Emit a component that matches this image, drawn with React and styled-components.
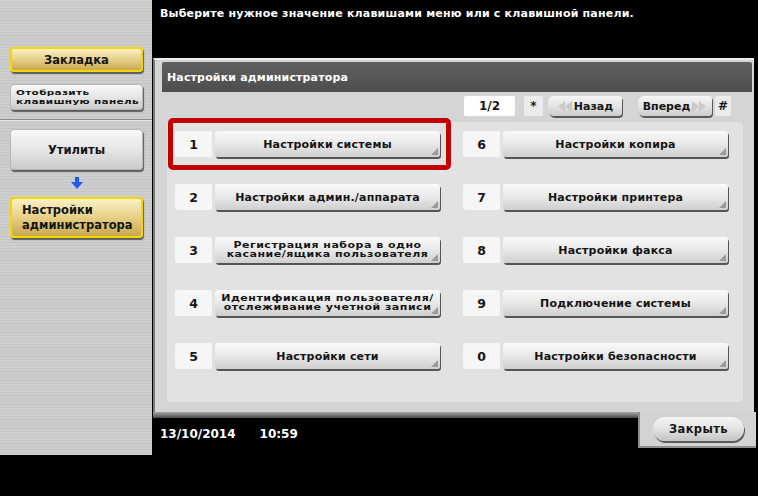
import React from 'react';
import styled, { createGlobalStyle, css } from 'styled-components';

const GlobalStyle = createGlobalStyle`
  html, body {
    margin: 0;
    padding: 0;
    background: #000;
  }
  body {
    font-family: "DejaVu Sans", "Liberation Sans", sans-serif;
  }
`;

const leftItems = [
  { num: '1', label: 'Настройки системы', selected: true },
  { num: '2', label: 'Настройки админ./аппарата' },
  { num: '3', label: ['Регистрация набора в одно', 'касание/ящика пользователя'] },
  { num: '4', label: ['Идентификация пользователя/', 'отслеживание учетной записи'] },
  { num: '5', label: 'Настройки сети' },
];

const rightItems = [
  { num: '6', label: 'Настройки копира' },
  { num: '7', label: 'Настройки принтера' },
  { num: '8', label: 'Настройки факса' },
  { num: '9', label: 'Подключение системы' },
  { num: '0', label: 'Настройки безопасности' },
];

const Screen = styled.div`
  width: 758px;
  height: 496px;
  background: #000;
  display: grid;
  grid-template-columns: 152px 1fr;
  overflow: hidden;
`;

const Sidebar = styled.div`
  height: 455px;
  background: repeating-linear-gradient(180deg, #cecece 0 2px, #c5c5c5 2px 3px);
  display: flex;
  flex-direction: column;
`;

const SideTop = styled.div`
  height: 120px;
  box-sizing: border-box;
  padding: 47px 9px 0 10px;
  display: flex;
  flex-direction: column;
  gap: 12px;
  border-bottom: 1px solid #8c8c8c;
  box-shadow: 0 1px 0 #e4e4e4;
`;

const SideBottom = styled.div`
  padding: 9px 9px 0 10px;
  display: flex;
  flex-direction: column;
`;

const SideButton = styled.div`
  height: ${p => p.$h}px;
  box-sizing: border-box;
  border-radius: 4px;
  display: flex;
  flex-direction: column;
  justify-content: center;
  align-items: ${p => (p.$left ? 'flex-start' : 'center')};
  padding-left: ${p => (p.$left ? p.$indent : 0)}px;
  font-weight: bold;
  color: #151515;
  box-shadow: 1px 2px 1px #5c5c5c;
  ${p =>
    p.$gold
      ? css`
          background: linear-gradient(#fbf1c8, #e9d38c 45%, #c9a850);
          border: 2px solid #f4d600;
        `
      : css`
          background: linear-gradient(#f8f8f8, #e6e6e6 50%, #cbcbcb);
          border: 1px solid #b8b8b8;
        `}
`;

const SideText = styled.span`
  font-size: 11.5px;
  line-height: ${p => p.$lh || 14}px;
  white-space: nowrap;
`;

/* two squeezed lines, as the panel's bitmap font draws long labels */
const Squeezed = styled.div`
  display: flex;
  flex-direction: column;
  align-items: ${p => (p.$left ? 'flex-start' : 'center')};
  font-size: ${p => p.$size || 11}px;
  line-height: 13px;
  letter-spacing: ${p => p.$ls || 0.5}px;
  white-space: nowrap;
  transform: scaleY(0.72);
  transform-origin: ${p => (p.$left ? 'left center' : 'center')};
`;

const ArrowSlot = styled.div`
  height: 27px;
  display: flex;
  justify-content: center;
  align-items: center;
`;

const Main = styled.div`
  display: flex;
  flex-direction: column;
`;

const Message = styled.div`
  height: 58px;
  box-sizing: border-box;
  padding: 7px 0 0 8px;
  color: #fff;
  font-size: 11px;
  font-weight: bold;
  letter-spacing: 0.2px;
  white-space: nowrap;
`;

const Panel = styled.div`
  height: 354px;
  box-sizing: border-box;
  margin: 0 4px 0 1px;
  background: #d5d5d5;
  border-left: 2px solid #7c7c7c;
  border-top: 2px solid #ededed;
  padding: 2px 2px 0 7px;
  display: flex;
  flex-direction: column;
`;

const TitleBar = styled.div`
  height: 30px;
  flex-shrink: 0;
  background: linear-gradient(#606060, #4d4d4d);
  border-radius: 2px 2px 0 0;
  color: #fff;
  font-size: 11px;
  font-weight: bold;
  letter-spacing: 0.15px;
  padding-left: 5px;
  display: flex;
  align-items: center;
`;

const Pager = styled.div`
  height: 20px;
  margin-top: 4px;
  padding-right: 21px;
  display: flex;
  justify-content: flex-end;
  align-items: center;
`;

const KeyBox = styled.div`
  width: ${p => p.$w}px;
  height: 20px;
  margin-right: ${p => p.$mr || 0}px;
  background: ${p => (p.$white ? '#fff' : '#ececec')};
  border-radius: 2px;
  display: flex;
  justify-content: center;
  align-items: center;
  font-size: 12px;
  font-weight: bold;
  color: #151515;
`;

const NavButton = styled.div`
  width: 74px;
  height: 20px;
  box-sizing: border-box;
  margin-right: ${p => p.$mr || 0}px;
  border-radius: 6px 3px 4px 6px;
  background: linear-gradient(#f6f6f6, #e2e2e2 55%, #cdcdcd);
  box-shadow: 1px 2px 0 #5a5a5a;
  display: flex;
  justify-content: center;
  align-items: center;
  gap: 2px;
  font-size: 11px;
  font-weight: bold;
  color: #151515;
`;

const Card = styled.div`
  height: 280px;
  margin: 6px 9px 0 5px;
  padding-left: 1px;
  background: #e2e2e2;
  border-radius: 4px;
`;

const Grid = styled.div`
  margin-top: -4px;
  display: grid;
  grid-template-columns: 283px 283px;
  grid-template-rows: repeat(5, 52px);
  grid-auto-flow: column;
  column-gap: 5px;
  row-gap: 1px;
`;

const Row = styled.div`
  box-sizing: border-box;
  border: 5px solid ${p => (p.$selected ? '#c30000' : 'transparent')};
  border-radius: 5px;
  padding: 0 6px 0 2px;
  display: flex;
  align-items: center;
  gap: 3px;
`;

const NumBox = styled.div`
  width: 37px;
  height: 26px;
  flex-shrink: 0;
  background: #f6f6f6;
  border-radius: 2px;
  display: flex;
  justify-content: center;
  align-items: center;
  font-size: 12.5px;
  font-weight: bold;
  color: #151515;
`;

const MenuButton = styled.div`
  position: relative;
  flex: 1;
  height: 26px;
  border-radius: 3px;
  background: linear-gradient(#fafafa, #e8e8e8 50%, #cfcfcf);
  box-shadow: 1px 2px 0 #555;
  display: flex;
  justify-content: center;
  align-items: center;
  color: #151515;
  font-weight: bold;

  &::after {
    content: '';
    position: absolute;
    right: 2px;
    bottom: 2px;
    border-style: solid;
    border-width: 0 0 7px 7px;
    border-color: transparent transparent #9a9a9a transparent;
  }
`;

const Label = styled.span`
  font-size: 11px;
  letter-spacing: 0.2px;
  white-space: nowrap;
`;

const Footer = styled.div`
  display: flex;
  margin-right: 2px;
`;

const DateArea = styled.div`
  flex: 1;
  height: 84px;
  box-sizing: border-box;
  margin-left: 1px;
  background: linear-gradient(#a8a8a8, #4a4a4a 6px, #000 6px);
  padding: 15px 0 0 7px;
  display: flex;
  gap: 24px;
  color: #fff;
  font-size: 12px;
  font-weight: bold;
`;

const CloseTab = styled.div`
  width: 118px;
  height: 36px;
  box-sizing: border-box;
  background: #d3d3d3;
  border-left: 2px solid #8e8e8e;
  border-bottom: 2px solid #8e8e8e;
  padding: 5px 0 0 13px;
`;

const CloseButton = styled.div`
  width: 91px;
  height: 24px;
  border-radius: 12px;
  background: linear-gradient(#f6f6f6, #e2e2e2 50%, #c4c4c4);
  box-shadow: 1px 2px 0 #5a5a5a;
  display: flex;
  justify-content: center;
  align-items: center;
  font-size: 11.5px;
  font-weight: bold;
  letter-spacing: 0.4px;
  color: #151515;
`;

const DownArrow = () => (
  <svg width="12" height="13" viewBox="0 0 12 13">
    <rect x="4" y="0" width="4" height="6" fill="#1f5cff" />
    <polygon points="0,5 12,5 6,12" fill="#1f5cff" />
  </svg>
);

const DoubleArrow = ({ dir }) => (
  <svg width="15" height="11" viewBox="0 0 15 11">
    <g fill="#c9c9c9" transform={dir === 'left' ? 'translate(15 0) scale(-1 1)' : undefined}>
      <polygon points="0,0 7,5.5 0,11" />
      <polygon points="7,0 14,5.5 7,11" />
    </g>
  </svg>
);

const MenuItem = ({ num, label, selected }) => (
  <Row $selected={selected}>
    <NumBox>{num}</NumBox>
    <MenuButton>
      {Array.isArray(label) ? (
        <Squeezed>
          {label.map(line => (
            <span key={line}>{line}</span>
          ))}
        </Squeezed>
      ) : (
        <Label>{label}</Label>
      )}
    </MenuButton>
  </Row>
);

export default function App() {
  return (
    <>
      <GlobalStyle />
      <Screen>
        <Sidebar>
          <SideTop>
            <SideButton $h={25} $gold>
              <SideText>Закладка</SideText>
            </SideButton>
            <SideButton $h={26} $left $indent={5}>
              <Squeezed $left $size={10.5} $ls={0.3}>
                <span>Отобразить</span>
                <span>клавишную панель</span>
              </Squeezed>
            </SideButton>
          </SideTop>
          <SideBottom>
            <SideButton $h={41}>
              <SideText>Утилиты</SideText>
            </SideButton>
            <ArrowSlot>
              <DownArrow />
            </ArrowSlot>
            <SideButton $h={41} $gold $left $indent={10}>
              <SideText $lh={15}>Настройки</SideText>
              <SideText $lh={15}>администратора</SideText>
            </SideButton>
          </SideBottom>
        </Sidebar>
        <Main>
          <Message>Выберите нужное значение клавишами меню или с клавишной панели.</Message>
          <Panel>
            <TitleBar>Настройки администратора</TitleBar>
            <Pager>
              <KeyBox $w={51} $white $mr={9}>1/2</KeyBox>
              <KeyBox $w={19} $mr={5}>*</KeyBox>
              <NavButton $mr={16}>
                <DoubleArrow dir="left" />
                Назад
              </NavButton>
              <NavButton $mr={3}>
                Вперед
                <DoubleArrow dir="right" />
              </NavButton>
              <KeyBox $w={16}>#</KeyBox>
            </Pager>
            <Card>
              <Grid>
                {leftItems.concat(rightItems).map(item => (
                  <MenuItem key={item.num} {...item} />
                ))}
              </Grid>
            </Card>
          </Panel>
          <Footer>
            <DateArea>
              <span>13/10/2014</span>
              <span>10:59</span>
            </DateArea>
            <CloseTab>
              <CloseButton>Закрыть</CloseButton>
            </CloseTab>
          </Footer>
        </Main>
      </Screen>
    </>
  );
}
